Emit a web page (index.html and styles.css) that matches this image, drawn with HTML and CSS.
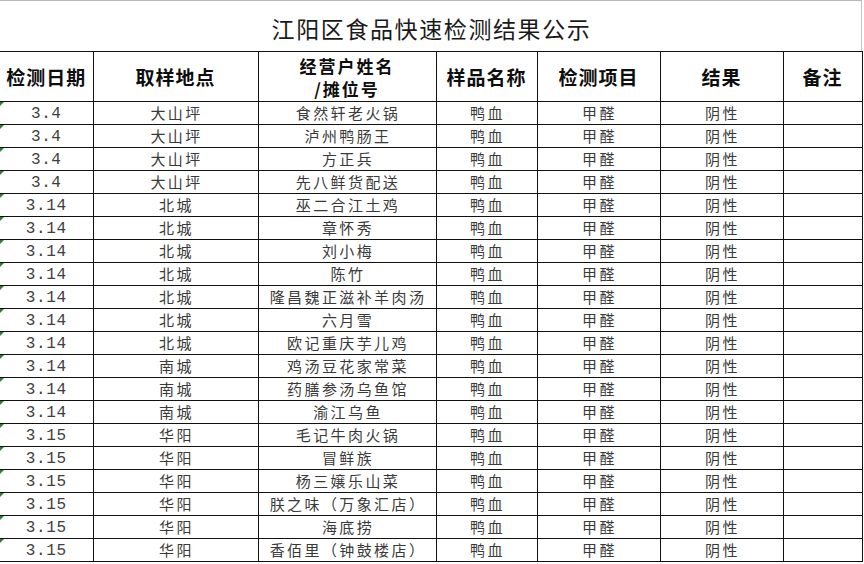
FILE: index.html
```html
<!DOCTYPE html>
<html lang="zh-CN">
<head>
<meta charset="utf-8">
<title>江阳区食品快速检测结果公示</title>
<link rel="stylesheet" href="styles.css">
</head>
<body>
<div class="sheet">
  <div class="title">江阳区食品快速检测结果公示</div>
  <table class="grid">
    <colgroup>
      <col class="c-date"><col class="c-place"><col class="c-name"><col class="c-sample"><col class="c-item"><col class="c-result"><col class="c-note">
    </colgroup>
    <thead>
      <tr>
        <th>检测日期</th>
        <th>取样地点</th>
        <th class="two"><span class="ln">经营户姓名</span><span class="ln">/摊位号</span></th>
        <th>样品名称</th>
        <th>检测项目</th>
        <th>结果</th>
        <th>备注</th>
      </tr>
    </thead>
    <tbody>
      <tr><td class="date">3.4</td><td>大山坪</td><td>食然轩老火锅</td><td>鸭血</td><td>甲醛</td><td>阴性</td><td></td></tr>
      <tr><td class="date">3.4</td><td>大山坪</td><td>泸州鸭肠王</td><td>鸭血</td><td>甲醛</td><td>阴性</td><td></td></tr>
      <tr><td class="date">3.4</td><td>大山坪</td><td>方正兵</td><td>鸭血</td><td>甲醛</td><td>阴性</td><td></td></tr>
      <tr><td class="date">3.4</td><td>大山坪</td><td>先八鲜货配送</td><td>鸭血</td><td>甲醛</td><td>阴性</td><td></td></tr>
      <tr><td class="date">3.14</td><td>北城</td><td>巫二合江土鸡</td><td>鸭血</td><td>甲醛</td><td>阴性</td><td></td></tr>
      <tr><td class="date">3.14</td><td>北城</td><td>章怀秀</td><td>鸭血</td><td>甲醛</td><td>阴性</td><td></td></tr>
      <tr><td class="date">3.14</td><td>北城</td><td>刘小梅</td><td>鸭血</td><td>甲醛</td><td>阴性</td><td></td></tr>
      <tr><td class="date">3.14</td><td>北城</td><td>陈竹</td><td>鸭血</td><td>甲醛</td><td>阴性</td><td></td></tr>
      <tr><td class="date">3.14</td><td>北城</td><td>隆昌魏正滋补羊肉汤</td><td>鸭血</td><td>甲醛</td><td>阴性</td><td></td></tr>
      <tr><td class="date">3.14</td><td>北城</td><td>六月雪</td><td>鸭血</td><td>甲醛</td><td>阴性</td><td></td></tr>
      <tr><td class="date">3.14</td><td>北城</td><td>欧记重庆芋儿鸡</td><td>鸭血</td><td>甲醛</td><td>阴性</td><td></td></tr>
      <tr><td class="date">3.14</td><td>南城</td><td>鸡汤豆花家常菜</td><td>鸭血</td><td>甲醛</td><td>阴性</td><td></td></tr>
      <tr><td class="date">3.14</td><td>南城</td><td>药膳参汤乌鱼馆</td><td>鸭血</td><td>甲醛</td><td>阴性</td><td></td></tr>
      <tr><td class="date">3.14</td><td>南城</td><td>渝江乌鱼</td><td>鸭血</td><td>甲醛</td><td>阴性</td><td></td></tr>
      <tr><td class="date">3.15</td><td>华阳</td><td>毛记牛肉火锅</td><td>鸭血</td><td>甲醛</td><td>阴性</td><td></td></tr>
      <tr><td class="date">3.15</td><td>华阳</td><td>冒鲜族</td><td>鸭血</td><td>甲醛</td><td>阴性</td><td></td></tr>
      <tr><td class="date">3.15</td><td>华阳</td><td>杨三嬢乐山菜</td><td>鸭血</td><td>甲醛</td><td>阴性</td><td></td></tr>
      <tr><td class="date">3.15</td><td>华阳</td><td>朕之味（万象汇店）</td><td>鸭血</td><td>甲醛</td><td>阴性</td><td></td></tr>
      <tr><td class="date">3.15</td><td>华阳</td><td>海底捞</td><td>鸭血</td><td>甲醛</td><td>阴性</td><td></td></tr>
      <tr><td class="date">3.15</td><td>华阳</td><td>香佰里（钟鼓楼店）</td><td>鸭血</td><td>甲醛</td><td>阴性</td><td></td></tr>
    </tbody>
  </table>
</div>
</body>
</html>
```

FILE: styles.css
```css
html, body {
  margin: 0;
  padding: 0;
  background: #ffffff;
}

body {
  width: 864px;
  height: 564px;
  overflow: hidden;
  font-family: "Noto Sans CJK SC", sans-serif;
  color: #111;
}

.sheet {
  width: 862px;
}

.title {
  box-sizing: border-box;
  height: 51px;
  width: 862px;
  border-top: 1px solid #b8b8b8;
  border-right: 1px solid #c4c4c4;
  display: flex;
  align-items: center;
  justify-content: center;
  padding-top: 4px;
  padding-left: 2px;
  font-size: 23px;
  letter-spacing: 1.6px;
  color: #1a1a1a;
}

.grid {
  border-collapse: collapse;
  table-layout: fixed;
  width: 862px;
}

.c-date { width: 93px; }
.c-place { width: 165px; }
.c-name { width: 178px; }
.c-sample { width: 101px; }
.c-item { width: 123px; }
.c-result { width: 123px; }
.c-note { width: 79px; }

.grid th,
.grid td {
  border: 1px solid #111;
  padding: 0;
  text-align: center;
  vertical-align: middle;
  white-space: nowrap;
}

.grid th:first-child,
.grid td:first-child {
  border-left: none;
}

.grid th {
  height: 49px;
  font-size: 19px;
  font-weight: 700;
  letter-spacing: 1px;
  line-height: 24px;
  color: #0d0d0d;
}

.grid th.two {
  padding-top: 1px;
  height: 48px;
}

.ln {
  display: block;
  height: 23px;
  line-height: 23px;
  font-size: 17px;
  letter-spacing: 2px;
}

.grid td {
  height: 22px;
  font-size: 15px;
  line-height: 22px;
  letter-spacing: 2.4px;
  color: #3a3a3a;
  padding-left: 2px;
}

.grid td.date {
  position: relative;
  height: 20px;
  font-family: "Liberation Mono", "Noto Sans CJK SC", monospace;
  font-size: 16px;
  letter-spacing: 0.6px;
  padding-left: 0;
  padding-top: 2px;
  line-height: 20px;
  color: #404040;
}

.grid td.date::before {
  content: "";
  position: absolute;
  left: 0;
  top: 0;
  width: 0;
  height: 0;
  border-top: 4px solid #2f7d32;
  border-right: 4px solid transparent;
}
```
